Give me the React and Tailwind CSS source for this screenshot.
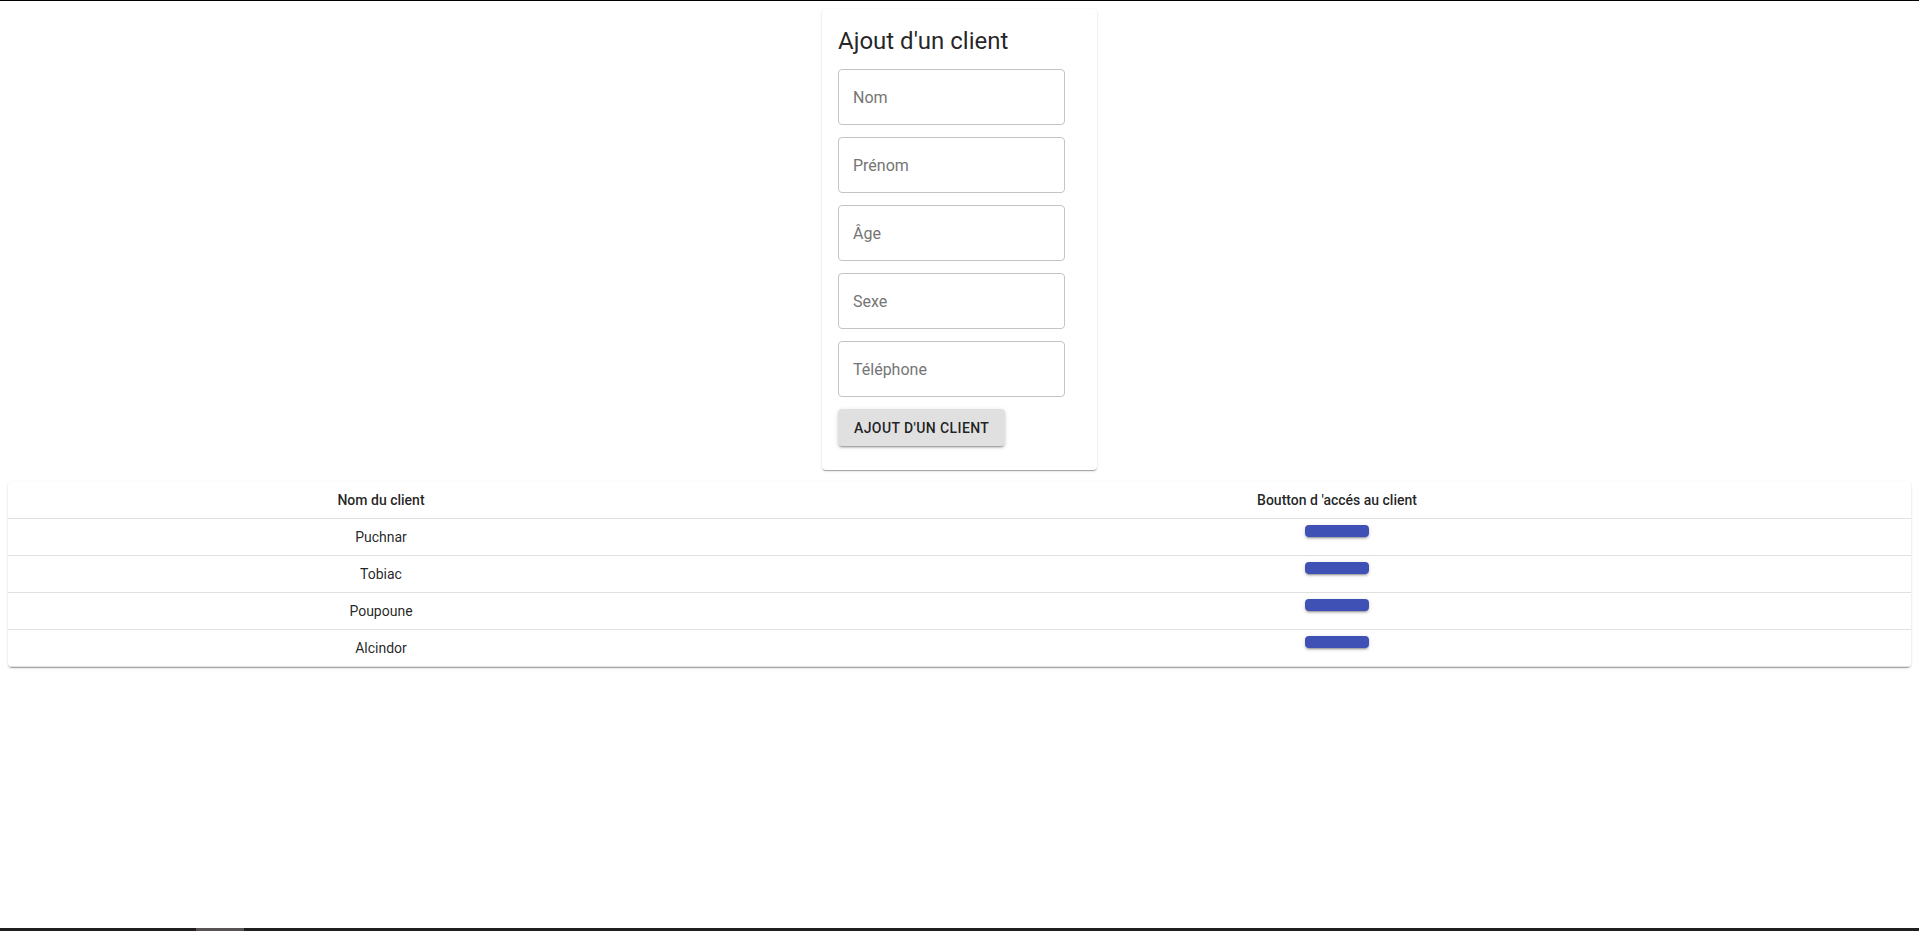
import { useState } from "react";

// Liste des clients affichés dans le tableau
const clients = [
    { id: 1, nom: "Puchnar" },
    { id: 2, nom: "Tobiac" },
    { id: 3, nom: "Poupoune" },
    { id: 4, nom: "Alcindor" },
];

const champs = ["Nom", "Prénom", "Âge", "Sexe", "Téléphone"];

const shadowCard = "shadow-[0px_2px_1px_-1px_rgba(0,0,0,0.2),0px_1px_1px_0px_rgba(0,0,0,0.14),0px_1px_3px_0px_rgba(0,0,0,0.12)]";
const shadowBtn = "shadow-[0px_3px_1px_-2px_rgba(0,0,0,0.2),0px_2px_2px_0px_rgba(0,0,0,0.14),0px_1px_5px_0px_rgba(0,0,0,0.12)]";

function Champ({ label, value, onChange }) {
    return (
        <input type="text" placeholder={label} value={value} onChange={onChange}
            className="w-[227px] h-14 px-[14px] rounded border border-[#c4c4c4] text-base text-black/90 placeholder:text-[#757575] outline-none focus:border-[#3f51b5]" />
    );
}

export default function App() {
    const [form, setForm] = useState({}); // valeurs du formulaire

    return (
        <div className="min-h-screen flex flex-col bg-white font-['Roboto','Liberation_Sans',sans-serif] text-black/[0.87]">
            <div className="h-px bg-black" />

            <div className="flex-1 px-2 pt-2">
                {/* formulaire d'ajout */}
                <div className={`mx-auto w-[275px] rounded bg-white p-4 pb-6 ${shadowCard}`}>
                    <h5 className="text-2xl leading-8 font-normal">Ajout d'un client</h5>
                    <div className="mt-3 flex flex-col gap-3">
                        {champs.map((c) => (
                            <Champ key={c} label={c} value={form[c] || ""}
                                onChange={(e) => setForm((prev) => ({ ...prev, [c]: e.target.value }))} />
                        ))}
                        <div>
                            <button type="button"
                                className={`h-[37px] px-4 rounded bg-[#e0e0e0] text-sm font-medium uppercase tracking-[0.4px] text-black/[0.87] ${shadowBtn}`}>
                                Ajout d'un client
                            </button>
                        </div>
                    </div>
                </div>

                {/* tableau des clients */}
                <div className={`mt-3 rounded bg-white text-sm ${shadowCard}`}>
                    <div className="grid grid-cols-[746px_1fr] h-[37px] border-b border-[#e0e0e0] font-medium">
                        <div className="flex items-center justify-center">Nom du client</div>
                        <div className="flex items-center justify-center pl-[9px]">Boutton d 'accés au client</div>
                    </div>
                    {clients.map((c) => (
                        <div key={c.id} className="grid grid-cols-[746px_1fr] h-[37px] border-b border-[#e0e0e0]">
                            <div className="flex items-center justify-center">{c.nom}</div>
                            <div className="flex justify-center pt-[6px] pl-[9px]">
                                <button type="button" className={`w-16 h-3 rounded bg-[#3f51b5] ${shadowBtn}`} />
                            </div>
                        </div>
                    ))}
                </div>
            </div>

            <div className="h-[3px] bg-[#1f1f1f] flex">
                <div className="ml-[196px] w-12 bg-[#585454]" />
            </div>
        </div>
    );
}
